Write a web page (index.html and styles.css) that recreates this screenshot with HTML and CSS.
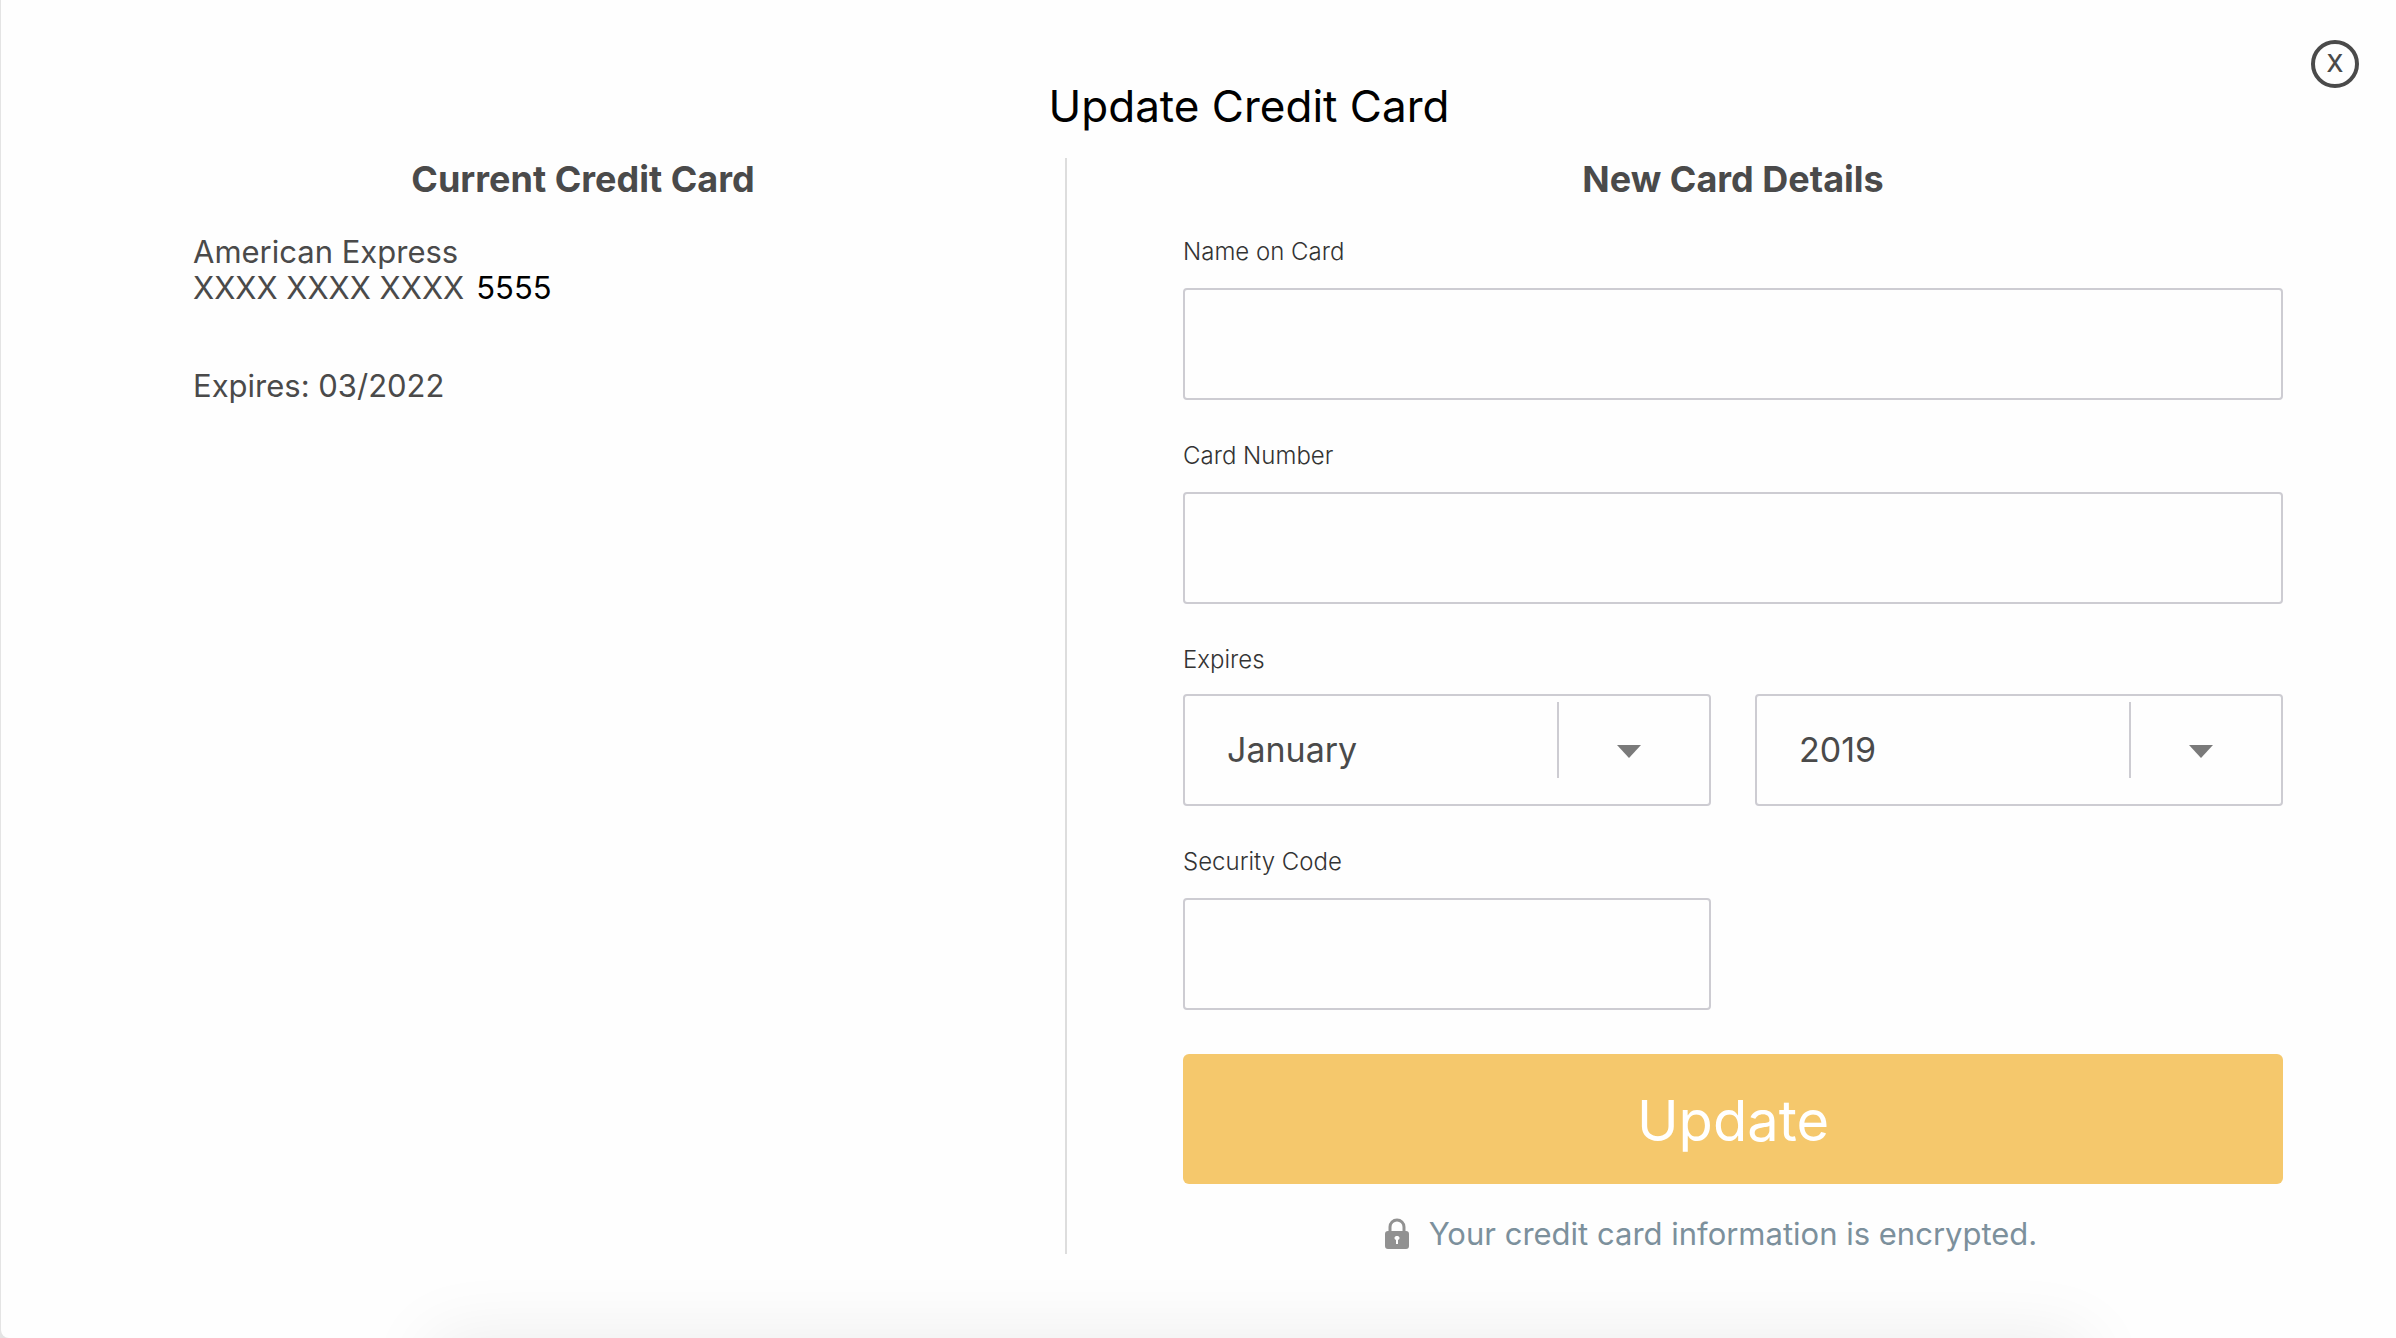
FILE: index.html
```html
<!DOCTYPE html>
<html lang="en">
<head>
<meta charset="utf-8">
<meta name="viewport" content="width=device-width, initial-scale=1">
<title>Update Credit Card</title>
<link rel="stylesheet" href="styles.css">
</head>
<body>
<main class="dialog">
  <button class="close" type="button" aria-label="Close">X</button>
  <h1 class="title">Update Credit Card</h1>
  <div class="columns">
    <section class="current">
      <h2 class="heading">Current Credit Card</h2>
      <p class="card-line">American Express</p>
      <p class="card-line card-number"><span>XXXX XXXX XXXX</span><span class="last-four">5555</span></p>
      <p class="card-line card-expiry">Expires: 03/2022</p>
    </section>
    <section class="details">
      <h2 class="heading">New Card Details</h2>
      <form class="form">
        <div class="field">
          <label class="label" for="name">Name on Card</label>
          <input class="control" id="name" type="text">
        </div>
        <div class="field">
          <label class="label" for="number">Card Number</label>
          <input class="control" id="number" type="text" inputmode="numeric">
        </div>
        <div class="field field-expiry">
          <label class="label" for="month">Expires</label>
          <div class="pair">
            <div class="picker">
              <select class="control select" id="month">
                <option>January</option><option>February</option><option>March</option><option>April</option><option>May</option><option>June</option><option>July</option><option>August</option><option>September</option><option>October</option><option>November</option><option>December</option>
              </select>
              <span class="picker-arrow"><svg width="24" height="13" viewBox="0 0 24 13"><path d="M0 0h24L12 13z" fill="#7a7a7a"/></svg></span>
            </div>
            <div class="picker">
              <select class="control select" id="year" aria-label="Expiry year">
                <option>2019</option><option>2020</option><option>2021</option><option>2022</option><option>2023</option>
              </select>
              <span class="picker-arrow"><svg width="24" height="13" viewBox="0 0 24 13"><path d="M0 0h24L12 13z" fill="#7a7a7a"/></svg></span>
            </div>
          </div>
        </div>
        <div class="field">
          <label class="label" for="code">Security Code</label>
          <div class="pair">
            <input class="control" id="code" type="text" inputmode="numeric">
          </div>
        </div>
        <button class="submit" type="submit">Update</button>
      </form>
      <p class="notice">
        <svg width="24" height="32" viewBox="0 0 24 32" aria-hidden="true">
          <path d="M5 14V9a7 7 0 0 1 14 0v5" fill="none" stroke="#919191" stroke-width="3"/>
          <path fill="#919191" fill-rule="evenodd" d="M3 13h18a3 3 0 0 1 3 3v12a3 3 0 0 1-3 3H3a3 3 0 0 1-3-3V16a3 3 0 0 1 3-3zM12 18a2 2 0 0 0-1 4v4h2v-4a2 2 0 0 0-1-4z"/>
        </svg>
        <span>Your credit card information is encrypted.</span>
      </p>
    </section>
  </div>
</main>
</body>
</html>
```
FILE: styles.css
```css
* {
  box-sizing: border-box;
}

body {
  margin: 0;
  background: #e4e4e4;
  color: #4a4a4a;
  font-family: Inter, "Liberation Sans", sans-serif;
}

h1,
h2,
p {
  margin: 0;
  font-weight: 400;
}

.dialog {
  position: relative;
  min-height: 100vh;
  margin-left: 1px;
  padding: 76px 113px 84px 192px;
  background: #fefefe;
  border-bottom-left-radius: 8px;
  overflow: hidden;
}

/* soft shadow rising from the bottom edge */
.dialog::after {
  content: "";
  position: absolute;
  top: 100%;
  left: 18%;
  right: 13%;
  height: 80px;
  box-shadow: 0 0 72px rgba(0, 0, 0, 0.08);
}

.close {
  position: absolute;
  top: 40px;
  right: 37px;
  width: 48px;
  height: 48px;
  padding: 0;
  border: 4px solid #4a4a4a;
  border-radius: 50%;
  background: none;
  color: #4a4a4a;
  font: 500 24px/40px Inter, "Liberation Sans", sans-serif;
}

.title {
  padding-left: 22px;
  color: #000;
  font-size: 44px;
  line-height: 60px;
  text-align: center;
}

.columns {
  display: grid;
  grid-template-columns: 872fr 1218fr;
  margin-top: 22px;
}

.current {
  padding-right: 92px;
}

.details {
  padding-left: 116px;
  border-left: 2px solid #ddd;
}

.heading {
  font-size: 36px;
  font-weight: 700;
  line-height: 42px;
  text-align: center;
}

.card-line {
  font-size: 31px;
  line-height: 36px;
}

.heading + .card-line {
  margin-top: 34px;
}

.card-number {
  display: flex;
  gap: 12px;
}

.last-four {
  color: #000;
}

.card-expiry {
  margin-top: 62px;
}

.form {
  display: flex;
  flex-direction: column;
  margin-top: 36px;
}

.field {
  display: flex;
  flex-direction: column;
  gap: 20px;
  margin-bottom: 40px;
}

.field-expiry {
  gap: 18px;
}

.label {
  color: #333;
  font-size: 24px;
  font-weight: 300;
  line-height: 32px;
}

.control {
  width: 100%;
  height: 112px;
  padding: 0 42px;
  border: 2px solid #cdccd2;
  border-radius: 4px;
  background: #fefefe;
  color: #4a4a4a;
  font: 400 34px/44px Inter, "Liberation Sans", sans-serif;
}

.select {
  grid-area: 1 / 1;
  appearance: none;
}

.pair {
  display: grid;
  grid-template-columns: 1fr 1fr;
  gap: 44px;
}

.picker {
  display: grid;
}

.picker-arrow {
  display: flex;
  grid-area: 1 / 1;
  align-items: flex-end;
  justify-self: end;
  width: 154px;
  height: 76px;
  margin-top: 8px;
  padding: 0 0 20px 58px;
  border-left: 2px solid #cdccd2;
  pointer-events: none;
}

.submit {
  height: 130px;
  margin-top: 4px;
  padding: 4px 0 0;
  border: 0;
  border-radius: 6px;
  background: #f5c86c;
  color: #fff;
  font: 400 56px/72px Inter, "Liberation Sans", sans-serif;
}

.notice {
  display: flex;
  justify-content: center;
  align-items: center;
  gap: 20px;
  padding-right: 44px;
  margin-top: 30px;
  color: #7c909c;
  font-size: 31px;
  line-height: 40px;
}
```
